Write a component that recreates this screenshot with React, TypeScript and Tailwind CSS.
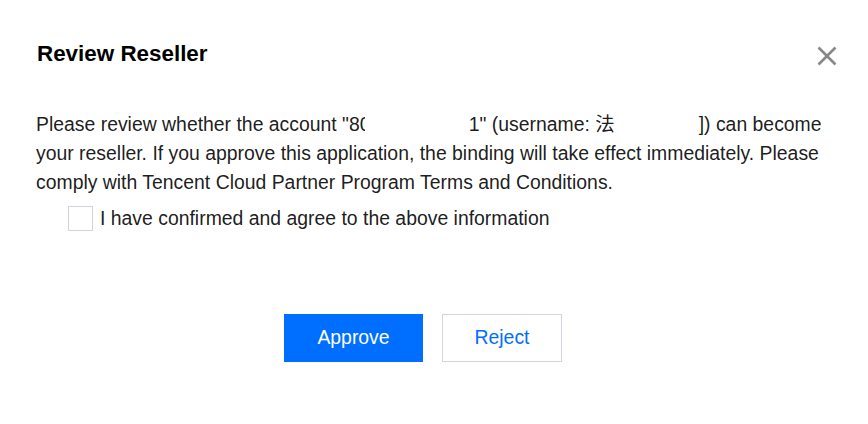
import React from "react";

export default function App() {
  return (
    <div
      className="w-[868px] h-[424px] bg-white relative overflow-hidden text-black"
      style={{ fontFamily: '"Liberation Sans", Arial, "Noto Sans CJK SC", sans-serif' }}
    >
      <div className="pt-[40px] px-[36px]">
        <div className="flex items-center justify-between">
          <h1 className="text-[22.4px] leading-[28px] font-bold ml-[1px]">Review Reseller</h1>
          <button className="mr-[-7px] mt-[4px] w-[24px] h-[24px] flex items-center justify-center">
            <svg width="20" height="20" viewBox="0 0 20 20">
              <path d="M1.5 1.5 L18.5 18.5 M18.5 1.5 L1.5 18.5" stroke="#888888" strokeWidth="2.6" fill="none" />
            </svg>
          </button>
        </div>
        <div className="mt-[42px] text-[19.4px] leading-[29px] text-black/90">
          <div className="whitespace-nowrap">
            Please review whether the account "8
            <span className="inline-block w-[5px] overflow-hidden align-bottom">0</span>
            <span className="inline-block w-[104px]" />
            1" (username: 法
            <span className="inline-block w-[84px]" />
            ]) can become
          </div>
          <div className="whitespace-nowrap">
            your reseller. If you approve this application, the binding will take effect immediately. Please
          </div>
          <div className="whitespace-nowrap">comply with Tencent Cloud Partner Program Terms and Conditions.</div>
        </div>
        <label className="mt-[7px] ml-[32px] flex items-center gap-[7px] text-[19.4px] leading-[29px] text-black/90">
          <span className="w-[25px] h-[25px] border border-[#cfd5de] bg-white" />
          <span>I have confirmed and agree to the above information</span>
        </label>
        <div className="mt-[81px] flex justify-center gap-[19px] pr-[22px]">
          <button className="w-[139px] h-[48px] bg-[#006eff] text-white text-[19.4px]">Approve</button>
          <button className="w-[120px] h-[48px] border border-[#cfd5de] bg-white text-[#006eff] text-[19.4px]">Reject</button>
        </div>
      </div>
    </div>
  );
}
